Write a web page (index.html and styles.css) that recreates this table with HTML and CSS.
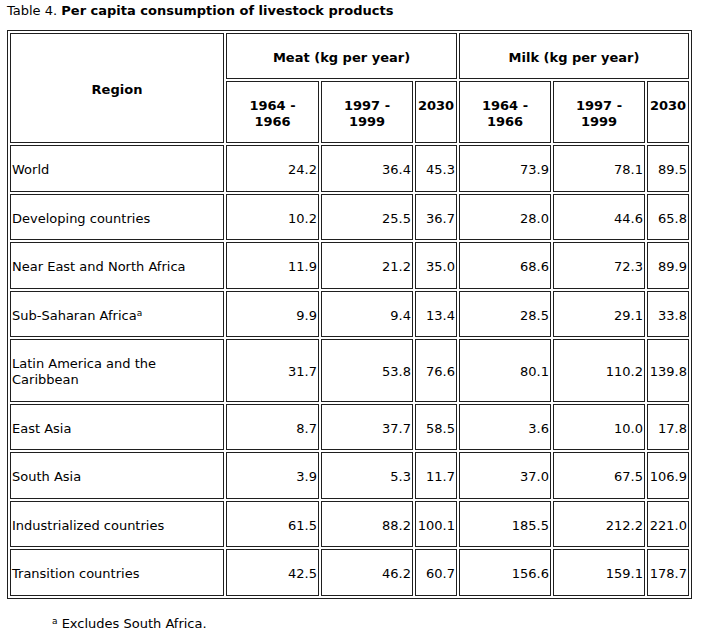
FILE: index.html
```html
<!DOCTYPE html>
<html lang="en">
<head>
<meta charset="utf-8">
<title>Table 4. Per capita consumption of livestock products</title>
<link rel="stylesheet" href="styles.css">
</head>
<body>
<p class="title">Table 4. <b>Per capita consumption of livestock products</b></p>
<table class="data">
  <colgroup>
    <col class="c-region">
    <col class="c-wide">
    <col class="c-wide2">
    <col class="c-narrow">
    <col class="c-wide2">
    <col class="c-wide2">
    <col class="c-narrow">
  </colgroup>
  <thead>
    <tr>
      <th rowspan="2">Region</th>
      <th colspan="3">Meat (kg per year)</th>
      <th colspan="3">Milk (kg per year)</th>
    </tr>
    <tr>
      <th>1964 -<br>1966</th>
      <th>1997 -<br>1999</th>
      <th class="yr">2030</th>
      <th>1964 -<br>1966</th>
      <th>1997 -<br>1999</th>
      <th class="yr">2030</th>
    </tr>
  </thead>
  <tbody>
    <tr><td>World</td><td class="num">24.2</td><td class="num">36.4</td><td class="num">45.3</td><td class="num">73.9</td><td class="num">78.1</td><td class="num">89.5</td></tr>
    <tr><td>Developing countries</td><td class="num">10.2</td><td class="num">25.5</td><td class="num">36.7</td><td class="num">28.0</td><td class="num">44.6</td><td class="num">65.8</td></tr>
    <tr><td>Near East and North Africa</td><td class="num">11.9</td><td class="num">21.2</td><td class="num">35.0</td><td class="num">68.6</td><td class="num">72.3</td><td class="num">89.9</td></tr>
    <tr><td>Sub-Saharan Africa<sup>a</sup></td><td class="num">9.9</td><td class="num">9.4</td><td class="num">13.4</td><td class="num">28.5</td><td class="num">29.1</td><td class="num">33.8</td></tr>
    <tr><td>Latin America and the<br>Caribbean</td><td class="num">31.7</td><td class="num">53.8</td><td class="num">76.6</td><td class="num">80.1</td><td class="num">110.2</td><td class="num">139.8</td></tr>
    <tr><td>East Asia</td><td class="num">8.7</td><td class="num">37.7</td><td class="num">58.5</td><td class="num">3.6</td><td class="num">10.0</td><td class="num">17.8</td></tr>
    <tr><td>South Asia</td><td class="num">3.9</td><td class="num">5.3</td><td class="num">11.7</td><td class="num">37.0</td><td class="num">67.5</td><td class="num">106.9</td></tr>
    <tr><td>Industrialized countries</td><td class="num">61.5</td><td class="num">88.2</td><td class="num">100.1</td><td class="num">185.5</td><td class="num">212.2</td><td class="num">221.0</td></tr>
    <tr><td>Transition countries</td><td class="num">42.5</td><td class="num">46.2</td><td class="num">60.7</td><td class="num">156.6</td><td class="num">159.1</td><td class="num">178.7</td></tr>
  </tbody>
</table>
<p class="note"><sup>a</sup> Excludes South Africa.</p>
</body>
</html>
```
FILE: styles.css
```css
html, body {
  background: #ffffff;
}

body {
  margin: 0;
  padding: 3px 7px 0 7px;
  font-family: "DejaVu Sans", Verdana, sans-serif;
  font-size: 13px;
  color: #000000;
}

.title {
  margin: 0 0 11px 0;
  line-height: 16px;
}

.data {
  width: 685px;
  table-layout: fixed;
  border: 1px solid #1f1f1f;
  border-spacing: 2px;
}

.c-region { width: 214px; }
.c-wide { width: 93px; }
.c-wide2 { width: 92px; }
.c-narrow { width: 42px; }

.data th,
.data td {
  border: 1px solid #1f1f1f;
  padding: 16px 1px 12px 1px;
  line-height: 16px;
  vertical-align: middle;
}

.data td {
  padding-top: 16.25px;
  padding-bottom: 12.25px;
  text-align: left;
}

.data th {
  font-weight: bold;
  text-align: center;
}

.data th.yr {
  padding-left: 0;
  padding-right: 0;
  vertical-align: top;
}

.data td.num {
  text-align: right;
  white-space: nowrap;
}

sup {
  font-size: 9px;
  line-height: 0;
  vertical-align: 4px;
}

.note {
  margin: 17px 0 0 45px;
  line-height: 16px;
}
```
